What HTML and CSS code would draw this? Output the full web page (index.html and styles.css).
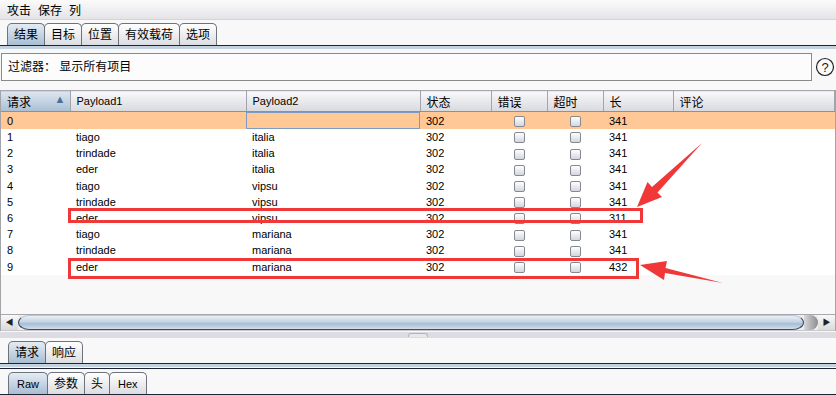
FILE: index.html
```html
<!DOCTYPE html>
<html lang="zh-CN">

<head>
    <meta charset="UTF-8">
    <title>Intruder 结果</title>
    <link rel="stylesheet" href="styles.css">
</head>

<body>
    <div class="menubar">
        <span>攻击</span>
        <span>保存</span>
        <span>列</span>
    </div>

    <div class="tabstrip">
        <div class="tab active">结果</div>
        <div class="tab">目标</div>
        <div class="tab">位置</div>
        <div class="tab">有效载荷</div>
        <div class="tab">选项</div>
    </div>

    <div class="filterRow">
        <div class="filter">过滤器： 显示所有项目</div>
        <svg class="help" width="20" height="20" viewBox="0 0 20 20">
            <circle cx="10" cy="10" r="8.5" fill="#fafafa" stroke="#222" stroke-width="1.2" />
            <text x="10" y="14.5" text-anchor="middle" font-size="13" font-family="Liberation Sans, sans-serif" fill="#222">?</text>
        </svg>
    </div>

    <div class="grid">
        <div class="tableWrapper">
            <table class="results">
                <colgroup>
                    <col style="width:69px">
                    <col style="width:176px">
                    <col style="width:174px">
                    <col style="width:71px">
                    <col style="width:56px">
                    <col style="width:56px">
                    <col style="width:70px">
                    <col>
                </colgroup>
                <thead>
                    <tr>
                        <th class="sorted">请求 <span class="sortArrow">▲</span></th>
                        <th class="en">Payload1</th>
                        <th class="en">Payload2</th>
                        <th>状态</th>
                        <th>错误</th>
                        <th>超时</th>
                        <th>长</th>
                        <th>评论</th>
                    </tr>
                </thead>
                <tbody>
                    <tr class="selected">
                        <td>0</td><td></td><td class="focus"></td><td>302</td>
                        <td class="chk"><span class="box"></span></td><td class="chk"><span class="box"></span></td>
                        <td>341</td><td></td>
                    </tr>
                    <tr>
                        <td>1</td><td>tiago</td><td>italia</td><td>302</td>
                        <td class="chk"><span class="box"></span></td><td class="chk"><span class="box"></span></td>
                        <td>341</td><td></td>
                    </tr>
                    <tr>
                        <td>2</td><td>trindade</td><td>italia</td><td>302</td>
                        <td class="chk"><span class="box"></span></td><td class="chk"><span class="box"></span></td>
                        <td>341</td><td></td>
                    </tr>
                    <tr>
                        <td>3</td><td>eder</td><td>italia</td><td>302</td>
                        <td class="chk"><span class="box"></span></td><td class="chk"><span class="box"></span></td>
                        <td>341</td><td></td>
                    </tr>
                    <tr>
                        <td>4</td><td>tiago</td><td>vipsu</td><td>302</td>
                        <td class="chk"><span class="box"></span></td><td class="chk"><span class="box"></span></td>
                        <td>341</td><td></td>
                    </tr>
                    <tr>
                        <td>5</td><td>trindade</td><td>vipsu</td><td>302</td>
                        <td class="chk"><span class="box"></span></td><td class="chk"><span class="box"></span></td>
                        <td>341</td><td></td>
                    </tr>
                    <tr>
                        <td>6</td><td>eder</td><td>vipsu</td><td>302</td>
                        <td class="chk"><span class="box"></span></td><td class="chk"><span class="box"></span></td>
                        <td>311</td><td></td>
                    </tr>
                    <tr>
                        <td>7</td><td>tiago</td><td>mariana</td><td>302</td>
                        <td class="chk"><span class="box"></span></td><td class="chk"><span class="box"></span></td>
                        <td>341</td><td></td>
                    </tr>
                    <tr>
                        <td>8</td><td>trindade</td><td>mariana</td><td>302</td>
                        <td class="chk"><span class="box"></span></td><td class="chk"><span class="box"></span></td>
                        <td>341</td><td></td>
                    </tr>
                    <tr>
                        <td>9</td><td>eder</td><td>mariana</td><td>302</td>
                        <td class="chk"><span class="box"></span></td><td class="chk"><span class="box"></span></td>
                        <td>432</td><td></td>
                    </tr>
                </tbody>
            </table>
        </div>

        <!-- barra de rolagem horizontal -->
        <div class="scrollbar">
            <div class="scrollBtn">◀</div>
            <div class="thumb"></div>
            <div class="thumbShadow"></div>
            <div class="scrollBtn">▶</div>
        </div>
    </div>

    <div class="splitter"><span class="grip"></span></div>

    <div class="tabstrip sub">
        <div class="tab active">请求</div>
        <div class="tab">响应</div>
    </div>

    <div class="tabstrip sub inner">
        <div class="tab active en">Raw</div>
        <div class="tab">参数</div>
        <div class="tab">头</div>
        <div class="tab en">Hex</div>
    </div>

    <!-- marcações em vermelho -->
    <svg class="annotations" width="836" height="395" viewBox="0 0 836 395">
        <rect x="69.5" y="209.5" width="572" height="12" fill="none" stroke="#f03838" stroke-width="3" />
        <rect x="69.5" y="259.5" width="568" height="18" fill="none" stroke="#f03838" stroke-width="3" />
        <polygon fill="#f03838" points="702,143 657.5,192.5 662,197 637,207 647.5,182 652,187" />
        <polygon fill="#f03838" points="723,283 665,273 664,280 640,265 667,261 665.5,268" />
    </svg>
</body>

</html>
```

FILE: styles.css
```css
body {
    margin: 0;
    width: 836px;
    height: 395px;
    overflow: hidden;
    position: relative;
    background-color: #f8f8f8;
    color: #000;
    font-family: "Liberation Sans", "Noto Sans CJK SC", sans-serif;
    font-size: 12px;
}

.menubar {
    height: 20px;
    display: flex;
    align-items: center;
    gap: 7px;
    padding-left: 7px;
    background: linear-gradient(#fbfbfb, #e4e4e8);
    box-sizing: border-box;
    border-bottom: 1px solid #d4d4d8;
}

/* abas */
.tabstrip {
    display: flex;
    padding: 3px 0 0 7px;
    border-bottom: 1px solid #1e2433;
    box-shadow: 0 3px 0 #c4d2e0;
}

.tab {
    height: 21px;
    line-height: 22px;
    padding: 0 6px;
    border: 1px solid #6e727a;
    border-bottom: none;
    border-radius: 5px 5px 0 0;
    background: linear-gradient(#ffffff, #dcdde2);
    margin-right: -1px;
}

.tab.active {
    background: linear-gradient(#e4ecf4, #a8bed3);
}

.tab.en {
    font-size: 11px;
    padding: 0 8px;
}

/* filtro */
.filterRow {
    display: flex;
    align-items: center;
    margin-top: 7px;
}

.filter {
    flex: 1;
    height: 26px;
    line-height: 26px;
    margin-left: 1px;
    padding-left: 6px;
    border: 1px solid #8a8a8a;
    background-color: #fcfcfc;
}

.help {
    margin: 0 1px 0 3px;
}

/* tabela */
.grid {
    margin-top: 9px;
    border-left: 1px solid #a4a4a8;
    border-right: 1px solid #a4a4a8;
}

.tableWrapper {
    height: 224px;
    background-color: #f8f8f8;
}

.results {
    width: 834px;
    table-layout: fixed;
    border-collapse: collapse;
}

.results th {
    height: 21px;
    padding: 0 0 0 6px;
    text-align: left;
    font-weight: normal;
    font-size: 12px;
    background: linear-gradient(#f9f9fb, #d8d9de);
    border-top: 1px solid #a8a8ae;
    border-bottom: 1px solid #8c9098;
    border-right: 1px solid #a0a4ac;
    box-sizing: border-box;
}

.results th.en {
    font-size: 11px;
}

.results th.sorted {
    background: linear-gradient(#dce6f0, #a9bfd5);
}

.sortArrow {
    float: right;
    margin-right: 4px;
    font-size: 11px;
    color: #4f6f92;
}

.results td {
    height: 16.2px;
    padding: 0 0 0 6px;
    font-size: 11px;
    background-color: #fff;
    white-space: nowrap;
}

.results tr.selected td {
    height: 17px;
    background-color: #ffc896;
}

.results td.focus {
    box-shadow: inset 0 0 0 1px #7c9cc4;
}

.results td.chk {
    padding: 0;
    text-align: center;
}

.box {
    display: inline-block;
    width: 9px;
    height: 9px;
    vertical-align: middle;
    border: 1px solid #858992;
    border-radius: 2px;
    background: linear-gradient(#ffffff, #d4d6dc);
}

/* barra de rolagem */
.scrollbar {
    display: flex;
    height: 15px;
    border-top: 1px solid #a8a8ac;
    border-bottom: 1px solid #c8c8cc;
    background-color: #eeeeee;
}

.scrollBtn {
    width: 17px;
    font-size: 8px;
    line-height: 15px;
    text-align: center;
    color: #222;
    background: linear-gradient(#f8f8f8, #dadadc);
}

.thumb {
    flex: 1;
    border: 1px solid #3c5068;
    border-top-color: #b8c8d8;
    border-radius: 12px / 8px;
    background: linear-gradient(#eaf0f6, #c4d4e4 45%, #a8bed4 60%, #d2deea);
}

.thumbShadow {
    width: 14px;
    background: linear-gradient(90deg, #d8d8da, #8c8c90);
    border-radius: 0 8px 8px 0;
}

/* divisor */
.splitter {
    height: 6px;
    margin-top: 1px;
    background-color: #dcdce2;
    display: flex;
    justify-content: center;
}

.grip {
    width: 18px;
    height: 3px;
    margin-top: 1px;
    border: 1px solid #b4b4bc;
    border-bottom: none;
    border-radius: 3px 3px 0 0;
    background-color: #e8e8ec;
}

.tabstrip.sub {
    margin-top: 0;
    padding-left: 8px;
}

.tabstrip.sub:first-of-type {
    margin-top: 3px;
}

.tabstrip.inner {
    margin-top: 4px;
    border-top: 1px solid #1e2433;
}

.annotations {
    position: absolute;
    top: 0;
    left: 0;
    pointer-events: none;
}
```
